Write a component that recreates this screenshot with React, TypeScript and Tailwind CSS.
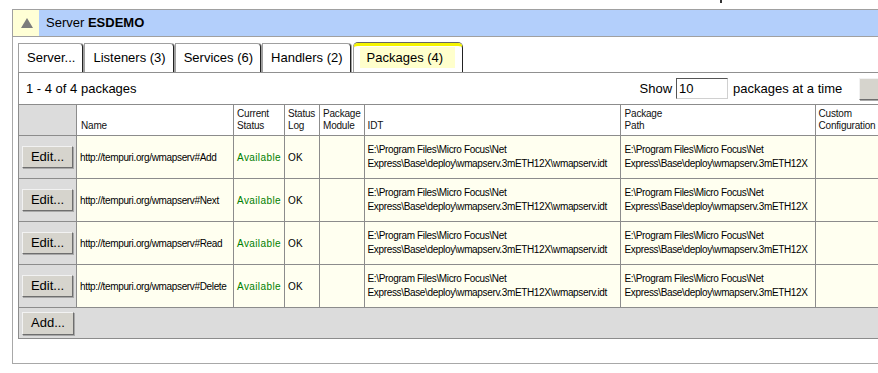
const tabs = ['Server...', 'Listeners (3)', 'Services (6)', 'Handlers (2)']

const rows = ['Add', 'Next', 'Read', 'Delete']

const btn =
  'flex items-center justify-center border border-t-[#f2f2f2] border-l-[#f2f2f2] border-r-[#6e6e6e] border-b-[#6e6e6e] bg-[#d6d4cd] text-[13px] text-black shadow-[1px_1px_0_#a8a8a8]'

function Idt() {
  return (
    <>
      E:\Program Files\Micro Focus\Net
      <br />
      Express\Base\deploy\wmapserv.3mETH12X\wmapserv.idt
    </>
  )
}

function Path() {
  return (
    <>
      E:\Program Files\Micro Focus\Net
      <br />
      Express\Base\deploy\wmapserv.3mETH12X
    </>
  )
}

export default function App() {
  const cell = 'border border-[#8c8c8c] px-[3px]'
  const head = `${cell} align-bottom pb-[3px] text-[10px] leading-[12px] tracking-[-0.2px] text-[#111]`
  const data = `${cell} bg-[#fffff0] align-middle text-[10px] tracking-[-0.35px] whitespace-nowrap`

  return (
    <div className="relative h-[373px] w-[878px] overflow-hidden bg-white font-['Liberation_Sans',Arial,sans-serif] text-black">
      <span className="absolute left-[720px] top-0 h-[3px] w-[2px] bg-[#333]" />

      <div className="pl-[12px] pt-[9px]">
        <div className="flex h-[28px] w-[900px] border-y border-l border-[#a0a0a0]">
          <div className="flex w-[26px] items-center justify-center bg-[#ffffd6] pl-[1px]">
            <svg width="12" height="10" viewBox="0 0 12 10">
              <path d="M6 0 L12 10 L0 10 Z" fill="#7c7c7c" />
            </svg>
          </div>
          <div className="flex flex-1 items-center bg-[#b3cffb] pl-[7px] text-[13px]">
            Server&nbsp;<b>ESDEMO</b>
          </div>
        </div>

        <div className="w-[900px] border-b border-l border-[#a8a8a8] pb-[24px] pl-[5px] pt-[6px]">
          {/* tab strip */}
          <div className="flex h-[29px] items-end gap-[1px]">
            {tabs.map((t) => (
              <div
                key={t}
                className="flex h-[29px] items-center rounded-tr-[4px] border-l border-t border-r border-[#a0a0a0] border-r-[#222] pl-[8px] pr-[7px] text-[13px] shadow-[1px_0_0_#a0a0a0]"
              >
                {t}
              </div>
            ))}
            <div className="ml-[1px] flex h-[29px] items-start rounded-t-[5px] border-x border-t-[3px] border-[#a0a0a0] border-t-[#f4f400] border-r-[#222] pl-[6px] pr-[7px] pt-[1px] shadow-[0_-1px_0_#666]">
              <span className="flex h-[21px] items-center bg-[#ffffcc] pl-[7px] pr-[12px] text-[13px]">Packages (4)</span>
            </div>
          </div>

          <div className="border-l border-t border-[#909090]">
            <div className="flex h-[31px] items-center pl-[7px] text-[13px]">
              <span>1 - 4 of 4 packages</span>
              <div className="ml-[503px] flex items-center">
                <span>Show</span>
                <input
                  defaultValue="10"
                  className="ml-[4px] h-[21px] w-[52px] border border-t-[#555] border-l-[#555] border-r-[#d0d0d0] border-b-[#d0d0d0] bg-white pl-[2px] text-[13px] outline-none"
                />
                <span className="ml-[5px]">packages at a time</span>
                <span className={`${btn} ml-[17px] h-[22px] w-[50px]`} />
              </div>
            </div>

            <table className="-ml-px table-fixed border-collapse">
              <colgroup>
                <col className="w-[58px]" />
                <col className="w-[157px]" />
                <col className="w-[51px]" />
                <col className="w-[35px]" />
                <col className="w-[41px]" />
                <col className="w-[256px]" />
                <col className="w-[195px]" />
                <col className="w-[71px]" />
              </colgroup>
              <tbody>
                <tr className="h-[31px]">
                  <td className={`${cell} bg-[#dcdcdc]`} />
                  <td className={`${head} pl-[4px]`}>Name</td>
                  <td className={head}>
                    Current
                    <br />
                    Status
                  </td>
                  <td className={head}>
                    Status
                    <br />
                    Log
                  </td>
                  <td className={head}>
                    Package
                    <br />
                    Module
                  </td>
                  <td className={head}>IDT</td>
                  <td className={`${head} pl-[4px]`}>
                    Package
                    <br />
                    Path
                  </td>
                  <td className={head}>
                    Custom
                    <br />
                    Configuration
                  </td>
                </tr>
                {rows.map((r) => (
                  <tr key={r} className="h-[43px]">
                    <td className={`${cell} bg-[#dcdcdc] align-middle`}>
                      <span className={`${btn} h-[22px] w-[51px]`}>Edit...</span>
                    </td>
                    <td className={data}>http://tempuri.org/wmapserv#{r}</td>
                    <td className={`${data} tracking-[0.4px] text-[#008000]`}>Available</td>
                    <td className={`${data} tracking-[0.2px]`}>OK</td>
                    <td className={data} />
                    <td className={`${data} leading-[14px]`}>
                      <Idt />
                    </td>
                    <td className={`${data} pl-[4px] leading-[14px]`}>
                      <Path />
                    </td>
                    <td className={data} />
                  </tr>
                ))}
                <tr className="h-[31px]">
                  <td colSpan={8} className={`${cell} bg-[#dcdcdc] align-middle`}>
                    <span className={`${btn} h-[23px] w-[52px]`}>Add...</span>
                  </td>
                </tr>
              </tbody>
            </table>
          </div>
        </div>
      </div>
    </div>
  )
}
